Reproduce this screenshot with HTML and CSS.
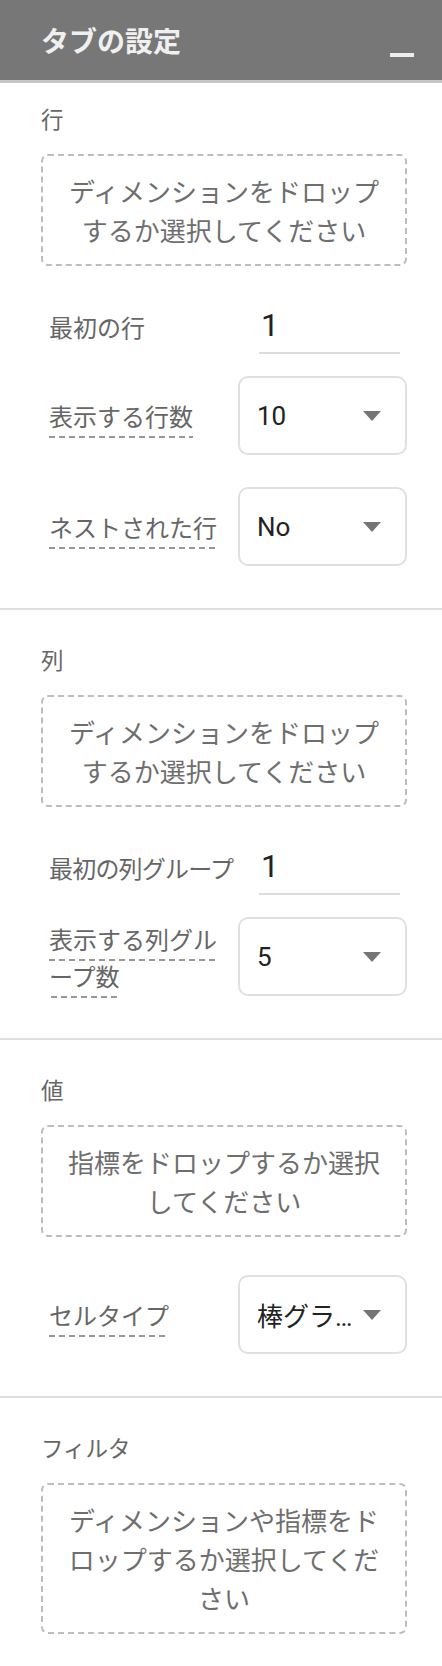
FILE: index.html
```html
<!DOCTYPE html>
<html lang="ja">
<head>
<meta charset="utf-8">
<title>タブの設定</title>
<link rel="stylesheet" href="styles.css">
</head>
<body>
<div class="panel">
  <header class="header">
    <h1 class="title">タブの設定</h1>
    <button class="min-btn" aria-label="最小化"></button>
  </header>

  <section class="section first">
    <div class="section-label">行</div>
    <div class="drop">ディメンションをドロップするか選択してください</div>
    <div class="row row-input">
      <div class="label-col"><span class="label">最初の行</span></div>
      <div class="input">1</div>
    </div>
    <div class="row row-select after-input">
      <div class="label-col"><span class="label tip">表示する行数</span></div>
      <div class="select"><span class="value">10</span><span class="arrow"></span></div>
    </div>
    <div class="row row-select">
      <div class="label-col"><span class="label tip">ネストされた行</span></div>
      <div class="select"><span class="value">No</span><span class="arrow"></span></div>
    </div>
  </section>

  <section class="section">
    <div class="section-label">列</div>
    <div class="drop">ディメンションをドロップするか選択してください</div>
    <div class="row row-input">
      <div class="label-col"><span class="label nowrap">最初の列グループ</span></div>
      <div class="input">1</div>
    </div>
    <div class="row row-select after-input">
      <div class="label-col"><span class="label tip">表示する列グル<br>ープ数</span></div>
      <div class="select"><span class="value">5</span><span class="arrow"></span></div>
    </div>
  </section>

  <section class="section">
    <div class="section-label">値</div>
    <div class="drop">指標をドロップするか選択してください</div>
    <div class="row row-select after-drop">
      <div class="label-col"><span class="label tip">セルタイプ</span></div>
      <div class="select"><span class="value">棒グラフ</span><span class="arrow"></span></div>
    </div>
  </section>

  <section class="section last">
    <div class="section-label">フィルタ</div>
    <div class="drop">ディメンションや指標をドロップするか選択してください</div>
  </section>
</div>
</body>
</html>
```

FILE: styles.css
```css
* {
  box-sizing: border-box;
}

html, body {
  margin: 0;
  padding: 0;
  background: #ffffff;
}

body {
  font-family: "Noto Sans CJK JP", "Noto Sans", sans-serif;
  color: #666666;
}

.panel {
  width: 442px;
}

.header {
  height: 83px;
  background: #777777;
  border-bottom: 3px solid #c6c6c6;
  display: flex;
  align-items: center;
  justify-content: space-between;
  padding: 0 28px 0 41px;
}

.title {
  margin: 0;
  font-size: 28px;
  font-weight: 700;
  color: #f0f0f0;
  line-height: 36px;
}

.min-btn {
  width: 24px;
  height: 4px;
  margin-top: 30px;
  padding: 0;
  border: 0;
  background: #eeeeee;
}

.section {
  padding: 34px 35px 42px 41px;
  border-bottom: 2px solid #e0e0e0;
}

.section.first {
  padding-top: 20px;
}

.section.last {
  border-bottom: 0;
  padding-bottom: 30px;
}

.section-label {
  font-size: 22.5px;
  line-height: 30px;
  color: #666666;
}

.drop {
  margin-top: 21px;
  border: 2px dashed #bdbdbd;
  border-radius: 7px;
  padding: 15px 24px;
  font-size: 26px;
  line-height: 39px;
  text-align: center;
  color: #6e6e6e;
}

.row {
  display: flex;
  align-items: center;
}

.row-input {
  margin-top: 32px;
}

.row-select {
  margin-top: 32px;
}

.row-select.after-input {
  margin-top: 22px;
}

.row-select.after-drop {
  margin-top: 38px;
}

.label-col {
  flex: 0 0 197px;
  padding-left: 8px;
  font-size: 24px;
  line-height: 37px;
  color: #666666;
}

.label.nowrap {
  white-space: nowrap;
  letter-spacing: -0.8px;
}

.label.tip {
  padding-bottom: 5px;
  background-image: repeating-linear-gradient(to right, #979797 0, #979797 6px, transparent 6px, transparent 10px);
  background-size: 100% 2px;
  background-position: left bottom;
  background-repeat: no-repeat;
}

.input {
  flex: 1;
  margin: 0 7px 0 21px;
  height: 56px;
  border-bottom: 2px solid #dddddd;
  display: flex;
  align-items: center;
  padding-left: 2px;
  font-family: Roboto, "Noto Sans CJK JP", sans-serif;
  font-size: 32px;
  color: #222222;
}

.select {
  flex: 1;
  min-width: 0;
  height: 79px;
  border: 2px solid #e0e0e0;
  border-radius: 10px;
  display: flex;
  align-items: center;
  gap: 6px;
  padding: 0 24px 0 17px;
}

.value {
  flex: 1;
  min-width: 0;
  overflow: hidden;
  white-space: nowrap;
  text-overflow: ellipsis;
  font-family: Roboto, "Noto Sans CJK JP", sans-serif;
  font-size: 26px;
  color: #222222;
}

.arrow {
  flex: 0 0 auto;
  width: 0;
  height: 0;
  border-left: 9.5px solid transparent;
  border-right: 9.5px solid transparent;
  border-top: 10px solid #757575;
}
```
